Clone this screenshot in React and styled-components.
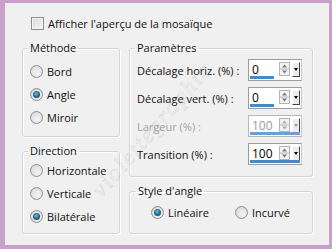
import React from "react";
import styled, { createGlobalStyle, css } from "styled-components";

const Global = createGlobalStyle`
  html, body { margin: 0; padding: 0; background: #c8a1ca; }
  body { font-family: "Open Sans", "Noto Sans", "DejaVu Sans", sans-serif; }
`;

const Frame = styled.div`
  position: relative;
  width: 332px;
  height: 249px;
  box-sizing: border-box;
  border-style: solid;
  border-color: #c8a1ca;
  border-width: 3px 3px 4px 5px;
  background: #f0f0f0;
  padding: 12px 16px 0 17px;
  font-size: 11px;
  color: #111;
  overflow: hidden;
`;

const CheckRow = styled.label`
  display: flex;
  align-items: center;
  gap: 4px;
  height: 16px;
  margin: 0 0 10px 9px;
`;

const CheckBox = styled.span`
  width: 13px;
  height: 13px;
  box-sizing: border-box;
  border: 1px solid #8f8f8f;
  background: linear-gradient(135deg, #dcdcdc, #f6f6f6);
  box-shadow: inset 0 0 0 1px #f4f4f4;
`;

const Columns = styled.div`
  display: grid;
  grid-template-columns: 98px 184px;
  column-gap: 9px;
`;

const Column = styled.div`
  display: flex;
  flex-direction: column;
  gap: 7px;
`;

const Group = styled.fieldset`
  margin: 0;
  min-width: 0;
  border: 1px solid #d5d5d5;
  border-radius: 3px;
  box-shadow: inset 1px 1px 0 #fff, 1px 1px 0 #fff;
  padding: ${(p) => p.$pad};
`;

const Legend = styled.legend`
  padding: 0 2px;
  margin-left: ${(p) => p.$indent || 5}px;
  line-height: 14px;
  height: 14px;
  font-size: 11px;
`;

const RadioRow = styled.div`
  display: flex;
  align-items: center;
  gap: 4px;
  height: 23px;
  padding-left: ${(p) => p.$indent || 7}px;
`;

const RadioDot = styled.span`
  width: 13px;
  height: 13px;
  box-sizing: border-box;
  border-radius: 50%;
  border: 1px solid #8e8f8f;
  background: radial-gradient(circle at 60% 65%, #f4f4f4 0, #e2e2e2 55%, #cfcfcf 100%);
  display: flex;
  align-items: center;
  justify-content: center;
  ${(p) =>
    p.$checked &&
    css`
      &::after {
        content: "";
        width: 7px;
        height: 7px;
        border-radius: 50%;
        background: radial-gradient(circle at 45% 40%, #7cc0d8 0, #2a6f98 45%, #0c2f4f 100%);
      }
    `}
`;

const InlineRadios = styled.div`
  display: flex;
  align-items: center;
  padding-left: 14px;
  gap: 19px;
`;

const ParamRow = styled.div`
  display: flex;
  align-items: center;
  justify-content: space-between;
  height: 28px;
  padding: 0 10px 0 7px;
  color: ${(p) => (p.$disabled ? "#a3a3a3" : "#111")};
`;

const Spin = styled.div`
  position: relative;
  width: 54px;
  height: 22px;
  box-sizing: border-box;
  border: 1px solid ${(p) => (p.$disabled ? "#b8b8b8" : "#9c9c9c")};
  border-right-color: #c9c9c9;
  background: #fff;
  display: flex;
  align-items: center;
  padding: 0 0 2px 3px;
  font-size: 12px;
  color: ${(p) => (p.$disabled ? "#9a9a9a" : "#000")};
`;

const SpinValue = styled.span`
  flex: 1;
`;

const Bar = styled.span`
  position: absolute;
  left: 1px;
  bottom: 1px;
  height: 3px;
  background: ${(p) => (p.$disabled ? "#6f9fd0" : "#4a87c4")};
`;

const Arrows = styled.svg`
  width: 11px;
  height: 14px;
  margin-right: 2px;
`;

const Drop = styled.span`
  width: 8px;
  height: 15px;
  box-sizing: border-box;
  border-right: 1px solid #444;
  border-bottom: 1px solid #444;
  border-left: 1px solid #fff;
  border-top: 1px solid #fff;
  background: #ececec;
  display: flex;
  align-items: center;
  justify-content: center;
  margin-right: 1px;
  &::after {
    content: "";
    border-left: 2.5px solid transparent;
    border-right: 2.5px solid transparent;
    border-top: 3px solid ${(p) => (p.$disabled ? "#9a9a9a" : "#000")};
  }
`;

const Watermark = styled.div`
  position: absolute;
  left: 147px;
  top: 127px;
  transform: translate(-50%, -50%) rotate(-49deg);
  font-family: "Liberation Serif", serif;
  font-size: 23px;
  font-style: italic;
  letter-spacing: 2px;
  color: transparent;
  -webkit-text-stroke: 0.6px rgba(120, 120, 120, 0.2);
  pointer-events: none;
  white-space: nowrap;
`;

function Radio({ checked, label, indent }) {
  return (
    <RadioRow $indent={indent}>
      <RadioDot $checked={checked} />
      <span>{label}</span>
    </RadioRow>
  );
}

function SpinBox({ value, min, max, disabled }) {
  const pct = ((value - min) / (max - min)) * 100;
  return (
    <Spin $disabled={disabled}>
      <SpinValue>{value}</SpinValue>
      <Arrows viewBox="0 0 11 14">
        <rect x="0.5" y="0.5" width="10" height="13" fill="#f2f2f2" stroke="#b5b5b5" />
        <line x1="1" y1="7" x2="10" y2="7" stroke="#b5b5b5" />
        <path d="M3 5.5 L5.5 2.5 L8 5.5 Z" fill={disabled ? "#b0b0b0" : "#7d7d7d"} />
        <path d="M3 8.5 L5.5 11.5 L8 8.5 Z" fill={disabled ? "#b0b0b0" : "#7d7d7d"} />
      </Arrows>
      <Drop $disabled={disabled} />
      <Bar $disabled={disabled} style={{ width: `calc(${pct}% - 2px)` }} />
    </Spin>
  );
}

const params = [
  { label: "Décalage horiz. (%) :", value: 0, min: -100, max: 100 },
  { label: "Décalage vert. (%) :", value: 0, min: -100, max: 100 },
  { label: "Largeur (%) :", value: 100, min: 0, max: 100, disabled: true },
  { label: "Transition (%) :", value: 100, min: 0, max: 100 },
];

export default function App() {
  return (
    <>
      <Global />
      <Frame>
        <CheckRow>
          <CheckBox />
          <span>Afficher l'aperçu de la mosaïque</span>
        </CheckRow>
        <Columns>
          <Column>
            <Group $pad="5px 0 7px">
              <Legend>Méthode</Legend>
              <Radio label="Bord" />
              <Radio label="Angle" checked />
              <Radio label="Miroir" />
            </Group>
            <Group $pad="1px 0 5px">
              <Legend>Direction</Legend>
              <Radio label="Horizontale" />
              <Radio label="Verticale" />
              <Radio label="Bilatérale" checked />
            </Group>
          </Column>
          <Column>
            <Group $pad="1px 0 8px">
              <Legend>Paramètres</Legend>
              {params.map((p) => (
                <ParamRow key={p.label} $disabled={p.disabled}>
                  <span>{p.label}</span>
                  <SpinBox {...p} />
                </ParamRow>
              ))}
            </Group>
            <Group $pad="3px 0 9px">
              <Legend $indent={6}>Style d'angle</Legend>
              <InlineRadios>
                <Radio label="Linéaire" checked indent={0} />
                <Radio label="Incurvé" indent={0} />
              </InlineRadios>
            </Group>
          </Column>
        </Columns>
        <Watermark>violettegraphic</Watermark>
      </Frame>
    </>
  );
}
